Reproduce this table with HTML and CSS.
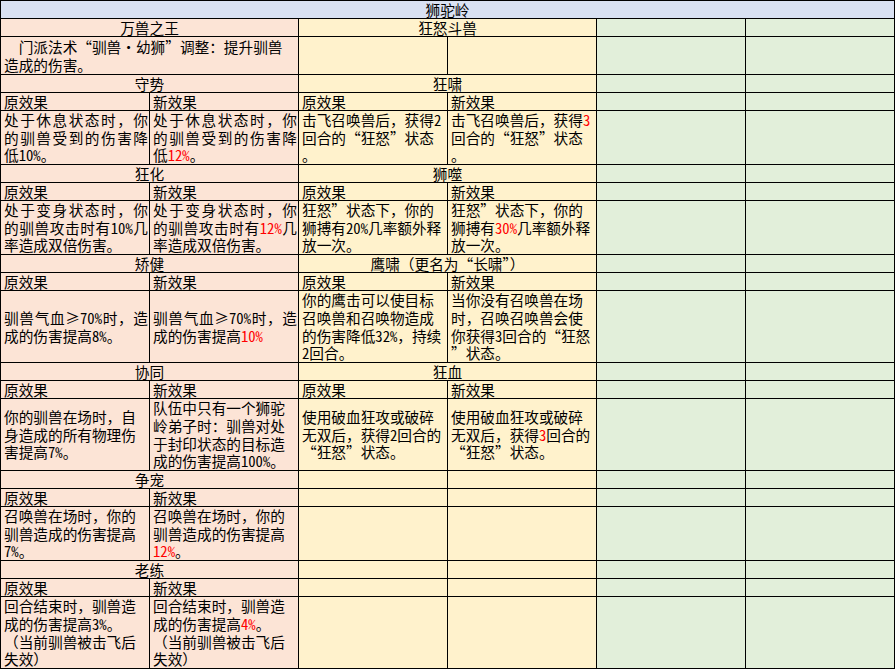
FILE: index.html
```html
<!DOCTYPE html>
<html lang="zh-CN">
<head>
<meta charset="utf-8">
<title>狮驼岭</title>
<link rel="stylesheet" href="styles.css">
</head>
<body>
<div class="sheet">
  <div class="cell hd s6 ctr">狮驼岭</div>

  <div class="cell pk s2 ctr">万兽之王</div>
  <div class="cell yl s2 ctr">狂怒斗兽</div>
  <div class="cell gr"></div><div class="cell gr"></div>

  <div class="cell pk s2"><p>　门派法术“驯兽·幼狮”调整：提升驯兽<br>造成的伤害。</p></div>
  <div class="cell yl"></div><div class="cell yl"></div>
  <div class="cell gr"></div><div class="cell gr"></div>

  <div class="cell pk s2 ctr">守势</div>
  <div class="cell yl s2 ctr">狂啸</div>
  <div class="cell gr"></div><div class="cell gr"></div>

  <div class="cell pk">原效果</div><div class="cell pk">新效果</div>
  <div class="cell yl">原效果</div><div class="cell yl">新效果</div>
  <div class="cell gr"></div><div class="cell gr"></div>

  <div class="cell pk j"><p>处于休息状态时，你的驯兽受到的伤害降低<span class="n">10%</span>。</p></div>
  <div class="cell pk j"><p>处于休息状态时，你的驯兽受到的伤害降低<span class="n r">12%</span>。</p></div>
  <div class="cell yl"><p>击飞召唤兽后，获得<span class="n">2</span>回合的“狂怒”状态<br>。</p></div>
  <div class="cell yl"><p>击飞召唤兽后，获得<span class="n r">3</span>回合的“狂怒”状态<br>。</p></div>
  <div class="cell gr"></div><div class="cell gr"></div>

  <div class="cell pk s2 ctr">狂化</div>
  <div class="cell yl s2 ctr">狮噬</div>
  <div class="cell gr"></div><div class="cell gr"></div>

  <div class="cell pk">原效果</div><div class="cell pk">新效果</div>
  <div class="cell yl">原效果</div><div class="cell yl">新效果</div>
  <div class="cell gr"></div><div class="cell gr"></div>

  <div class="cell pk j"><p>处于变身状态时，你的驯兽攻击时有<span class="n">10%</span>几率造成双倍伤害。</p></div>
  <div class="cell pk j"><p>处于变身状态时，你的驯兽攻击时有<span class="n r">12%</span>几率造成双倍伤害。</p></div>
  <div class="cell yl"><p>狂怒”状态下，你的<br>狮搏有<span class="n">20%</span>几率额外释<br>放一次。</p></div>
  <div class="cell yl"><p>狂怒”状态下，你的<br>狮搏有<span class="n r">30%</span>几率额外释<br>放一次。</p></div>
  <div class="cell gr"></div><div class="cell gr"></div>

  <div class="cell pk s2 ctr">矫健</div>
  <div class="cell yl s2 ctr">鹰啸（更名为“长啸”）</div>
  <div class="cell gr"></div><div class="cell gr"></div>

  <div class="cell pk">原效果</div><div class="cell pk">新效果</div>
  <div class="cell yl">原效果</div><div class="cell yl">新效果</div>
  <div class="cell gr"></div><div class="cell gr"></div>

  <div class="cell pk j"><p>驯兽气血≥<span class="n">70%</span>时，造成的伤害提高<span class="n">8%</span>。</p></div>
  <div class="cell pk j"><p>驯兽气血≥<span class="n">70%</span>时，造成的伤害提高<span class="n r">10%</span></p></div>
  <div class="cell yl"><p>你的鹰击可以使目标<br>召唤兽和召唤物造成<br>的伤害降低<span class="n">32%</span>，持续<br><span class="n">2</span>回合。</p></div>
  <div class="cell yl"><p>当你没有召唤兽在场<br>时，召唤召唤兽会使<br>你获得<span class="n">3</span>回合的“狂怒<br>”状态。</p></div>
  <div class="cell gr"></div><div class="cell gr"></div>

  <div class="cell pk s2 ctr">协同</div>
  <div class="cell yl s2 ctr">狂血</div>
  <div class="cell gr"></div><div class="cell gr"></div>

  <div class="cell pk">原效果</div><div class="cell pk">新效果</div>
  <div class="cell yl">原效果</div><div class="cell yl">新效果</div>
  <div class="cell gr"></div><div class="cell gr"></div>

  <div class="cell pk"><p>你的驯兽在场时，自<br>身造成的所有物理伤<br>害提高<span class="n">7%</span>。</p></div>
  <div class="cell pk"><p>队伍中只有一个狮驼<br>岭弟子时：驯兽对处<br>于封印状态的目标造<br>成的伤害提高<span class="n">100%</span>。</p></div>
  <div class="cell yl"><p>使用破血狂攻或破碎<br>无双后，获得<span class="n">2</span>回合的<br>“狂怒”状态。</p></div>
  <div class="cell yl"><p>使用破血狂攻或破碎<br>无双后，获得<span class="n r">3</span>回合的<br>“狂怒”状态。</p></div>
  <div class="cell gr"></div><div class="cell gr"></div>

  <div class="cell pk s2 ctr">争宠</div>
  <div class="cell yl"></div><div class="cell yl"></div>
  <div class="cell gr"></div><div class="cell gr"></div>

  <div class="cell pk">原效果</div><div class="cell pk">新效果</div>
  <div class="cell yl"></div><div class="cell yl"></div>
  <div class="cell gr"></div><div class="cell gr"></div>

  <div class="cell pk"><p>召唤兽在场时，你的<br>驯兽造成的伤害提高<br><span class="n">7%</span>。</p></div>
  <div class="cell pk"><p>召唤兽在场时，你的<br>驯兽造成的伤害提高<br><span class="n r">12%</span>。</p></div>
  <div class="cell yl"></div><div class="cell yl"></div>
  <div class="cell gr"></div><div class="cell gr"></div>

  <div class="cell pk s2 ctr">老练</div>
  <div class="cell yl"></div><div class="cell yl"></div>
  <div class="cell gr"></div><div class="cell gr"></div>

  <div class="cell pk">原效果</div><div class="cell pk">新效果</div>
  <div class="cell yl"></div><div class="cell yl"></div>
  <div class="cell gr"></div><div class="cell gr"></div>

  <div class="cell pk"><p>回合结束时，驯兽造<br>成的伤害提高<span class="n">3%</span>。<br>（当前驯兽被击飞后<br>失效）</p></div>
  <div class="cell pk"><p>回合结束时，驯兽造<br>成的伤害提高<span class="n r">4%</span>。<br>（当前驯兽被击飞后<br>失效）</p></div>
  <div class="cell yl"></div><div class="cell yl"></div>
  <div class="cell gr"></div><div class="cell gr"></div>
</div>
</body>
</html>
```

FILE: styles.css
```css
html, body {
  margin: 0;
  padding: 0;
  background: #ffffff;
}

body {
  font-family: "Noto Sans CJK SC", "Noto Sans", sans-serif;
  font-size: 14.67px;
  line-height: 17.6px;
  color: #000000;
}

.sheet {
  display: grid;
  grid-template-columns: repeat(6, 149px);
  grid-template-rows:
    18px 18px 38px 18px 18px 54px
    18px 18px 54px
    18px 18px 72px
    18px 18px 72px
    18px 18px 54px
    18px 18px 72px;
  width: max-content;
  border-left: 1px solid #000000;
  border-top: 1px solid #000000;
}

.cell {
  display: grid;
  align-content: center;
  padding: 0 1px 0 3px;
  border-right: 1px solid #000000;
  border-bottom: 1px solid #000000;
  line-height: 17px;
}

.cell p {
  margin: 0;
  line-height: 17.6px;
}

.s2 { grid-column: span 2; }
.s6 { grid-column: span 6; }

.ctr { text-align: center; padding: 0; }

.hd { background: #d9e1f2; }
.pk { background: #fce4d6; }
.yl { background: #fff2cc; }
.gr { background: #e2efda; }

.j p {
  text-align: justify;
  text-justify: inter-character;
}

.n {
  font-feature-settings: "hwid" 1;
}

.r {
  color: #ff0000;
}
```
